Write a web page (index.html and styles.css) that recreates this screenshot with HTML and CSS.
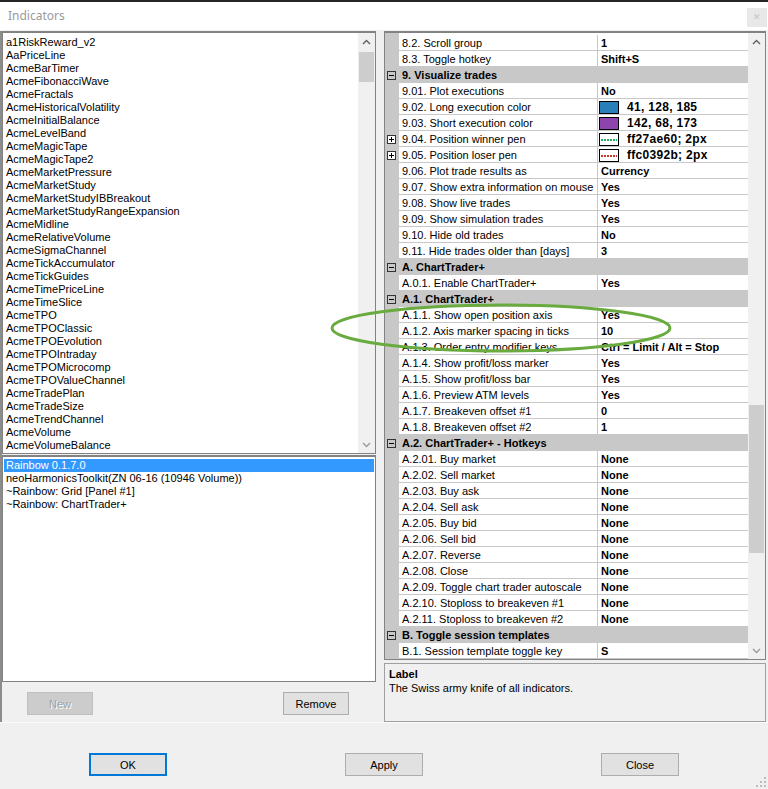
FILE: index.html
```html
<!DOCTYPE html>
<html lang="en">
  <head>
    <meta charset="UTF-8" />
    <title>Indicators</title>
    <link rel="stylesheet" href="styles.css">
  </head>
  <body>
    <div class="window">
      <div class="topline"></div>
      <div class="titlebar">
        <span class="title">Indicators</span>
        <span class="close">&#x2715;</span>
      </div>

      <div class="main">
        <!-- indicator lists -->
        <div class="left">
          <div class="listbox available">
            <ul>
              <li>a1RiskReward_v2</li>
              <li>AaPriceLine</li>
              <li>AcmeBarTimer</li>
              <li>AcmeFibonacciWave</li>
              <li>AcmeFractals</li>
              <li>AcmeHistoricalVolatility</li>
              <li>AcmeInitialBalance</li>
              <li>AcmeLevelBand</li>
              <li>AcmeMagicTape</li>
              <li>AcmeMagicTape2</li>
              <li>AcmeMarketPressure</li>
              <li>AcmeMarketStudy</li>
              <li>AcmeMarketStudyIBBreakout</li>
              <li>AcmeMarketStudyRangeExpansion</li>
              <li>AcmeMidline</li>
              <li>AcmeRelativeVolume</li>
              <li>AcmeSigmaChannel</li>
              <li>AcmeTickAccumulator</li>
              <li>AcmeTickGuides</li>
              <li>AcmeTimePriceLine</li>
              <li>AcmeTimeSlice</li>
              <li>AcmeTPO</li>
              <li>AcmeTPOClassic</li>
              <li>AcmeTPOEvolution</li>
              <li>AcmeTPOIntraday</li>
              <li>AcmeTPOMicrocomp</li>
              <li>AcmeTPOValueChannel</li>
              <li>AcmeTradePlan</li>
              <li>AcmeTradeSize</li>
              <li>AcmeTrendChannel</li>
              <li>AcmeVolume</li>
              <li>AcmeVolumeBalance</li>
            </ul>
            <div class="vscroll">
              <div class="arrow"><svg width="9" height="6" viewBox="0 0 9 6"><path d="M1 5 L4.5 1.5 L8 5" fill="none" stroke="#606060" stroke-width="1.4"/></svg></div>
              <div class="thumb small"></div>
              <div class="track"></div>
              <div class="arrow"><svg width="9" height="6" viewBox="0 0 9 6"><path d="M1 1 L4.5 4.5 L8 1" fill="none" stroke="#9a9a9a" stroke-width="1.4"/></svg></div>
            </div>
          </div>

          <div class="listbox applied">
            <ul>
              <li class="selected">Rainbow 0.1.7.0</li>
              <li>neoHarmonicsToolkit(ZN 06-16 (10946 Volume))</li>
              <li>~Rainbow: Grid [Panel #1]</li>
              <li>~Rainbow: ChartTrader+</li>
            </ul>
          </div>

          <div class="left-buttons">
            <button class="btn" disabled>New</button>
            <button class="btn">Remove</button>
          </div>
        </div>

        <!-- property grid -->
        <div class="right">
          <div class="propgrid">
            <div class="rows">
              <div class="row"><span class="gut"></span><span class="name">8.2. Scroll group</span><span class="val">1</span></div>
              <div class="row"><span class="gut"></span><span class="name">8.3. Toggle hotkey</span><span class="val">Shift+S</span></div>
              <div class="row cat"><span class="gut"><svg class="tog" viewBox="0 0 9 9"><rect x=".5" y=".5" width="8" height="8" fill="none" stroke="#333"/><path d="M2 4.5h5" stroke="#000"/></svg></span><span class="label">9. Visualize trades</span></div>
              <div class="row"><span class="gut"></span><span class="name">9.01. Plot executions</span><span class="val">No</span></div>
              <div class="row"><span class="gut"></span><span class="name">9.02. Long execution color</span><span class="val"><i class="swatch" style="background:#2980b9"></i><span class="wide-val">41, 128, 185</span></span></div>
              <div class="row"><span class="gut"></span><span class="name">9.03. Short execution color</span><span class="val"><i class="swatch" style="background:#8e44ad"></i><span class="wide-val">142, 68, 173</span></span></div>
              <div class="row"><span class="gut"><svg class="tog" viewBox="0 0 9 9"><rect x=".5" y=".5" width="8" height="8" fill="#fff" stroke="#333"/><path d="M2 4.5h5M4.5 2v5" stroke="#000"/></svg></span><span class="name">9.04. Position winner pen</span><span class="val"><i class="swatch pen"><b class="dots" style="color:#27ae60"></b></i><span class="wide-val">ff27ae60; 2px</span></span></div>
              <div class="row"><span class="gut"><svg class="tog" viewBox="0 0 9 9"><rect x=".5" y=".5" width="8" height="8" fill="#fff" stroke="#333"/><path d="M2 4.5h5M4.5 2v5" stroke="#000"/></svg></span><span class="name">9.05. Position loser pen</span><span class="val"><i class="swatch pen"><b class="dots" style="color:#c0392b"></b></i><span class="wide-val">ffc0392b; 2px</span></span></div>
              <div class="row"><span class="gut"></span><span class="name">9.06. Plot trade results as</span><span class="val">Currency</span></div>
              <div class="row"><span class="gut"></span><span class="name">9.07. Show extra information on mouse</span><span class="val">Yes</span></div>
              <div class="row"><span class="gut"></span><span class="name">9.08. Show live trades</span><span class="val">Yes</span></div>
              <div class="row"><span class="gut"></span><span class="name">9.09. Show simulation trades</span><span class="val">Yes</span></div>
              <div class="row"><span class="gut"></span><span class="name">9.10. Hide old trades</span><span class="val">No</span></div>
              <div class="row"><span class="gut"></span><span class="name">9.11. Hide trades older than [days]</span><span class="val">3</span></div>
              <div class="row cat"><span class="gut"><svg class="tog" viewBox="0 0 9 9"><rect x=".5" y=".5" width="8" height="8" fill="none" stroke="#333"/><path d="M2 4.5h5" stroke="#000"/></svg></span><span class="label">A. ChartTrader+</span></div>
              <div class="row"><span class="gut"></span><span class="name">A.0.1. Enable ChartTrader+</span><span class="val">Yes</span></div>
              <div class="row cat"><span class="gut"><svg class="tog" viewBox="0 0 9 9"><rect x=".5" y=".5" width="8" height="8" fill="none" stroke="#333"/><path d="M2 4.5h5" stroke="#000"/></svg></span><span class="label">A.1. ChartTrader+</span></div>
              <div class="row"><span class="gut"></span><span class="name">A.1.1. Show open position axis</span><span class="val">Yes</span></div>
              <div class="row"><span class="gut"></span><span class="name">A.1.2. Axis marker spacing in ticks</span><span class="val">10</span></div>
              <div class="row"><span class="gut"></span><span class="name">A.1.3. Order entry modifier keys</span><span class="val">Ctrl = Limit / Alt = Stop</span></div>
              <div class="row"><span class="gut"></span><span class="name">A.1.4. Show profit/loss marker</span><span class="val">Yes</span></div>
              <div class="row"><span class="gut"></span><span class="name">A.1.5. Show profit/loss bar</span><span class="val">Yes</span></div>
              <div class="row"><span class="gut"></span><span class="name">A.1.6. Preview ATM levels</span><span class="val">Yes</span></div>
              <div class="row"><span class="gut"></span><span class="name">A.1.7. Breakeven offset #1</span><span class="val">0</span></div>
              <div class="row"><span class="gut"></span><span class="name">A.1.8. Breakeven offset #2</span><span class="val">1</span></div>
              <div class="row cat"><span class="gut"><svg class="tog" viewBox="0 0 9 9"><rect x=".5" y=".5" width="8" height="8" fill="none" stroke="#333"/><path d="M2 4.5h5" stroke="#000"/></svg></span><span class="label">A.2. ChartTrader+ - Hotkeys</span></div>
              <div class="row"><span class="gut"></span><span class="name">A.2.01. Buy market</span><span class="val">None</span></div>
              <div class="row"><span class="gut"></span><span class="name">A.2.02. Sell market</span><span class="val">None</span></div>
              <div class="row"><span class="gut"></span><span class="name">A.2.03. Buy ask</span><span class="val">None</span></div>
              <div class="row"><span class="gut"></span><span class="name">A.2.04. Sell ask</span><span class="val">None</span></div>
              <div class="row"><span class="gut"></span><span class="name">A.2.05. Buy bid</span><span class="val">None</span></div>
              <div class="row"><span class="gut"></span><span class="name">A.2.06. Sell bid</span><span class="val">None</span></div>
              <div class="row"><span class="gut"></span><span class="name">A.2.07. Reverse</span><span class="val">None</span></div>
              <div class="row"><span class="gut"></span><span class="name">A.2.08. Close</span><span class="val">None</span></div>
              <div class="row"><span class="gut"></span><span class="name">A.2.09. Toggle chart trader autoscale</span><span class="val">None</span></div>
              <div class="row"><span class="gut"></span><span class="name">A.2.10. Stoploss to breakeven #1</span><span class="val">None</span></div>
              <div class="row"><span class="gut"></span><span class="name">A.2.11. Stoploss to breakeven #2</span><span class="val">None</span></div>
              <div class="row cat"><span class="gut"><svg class="tog" viewBox="0 0 9 9"><rect x=".5" y=".5" width="8" height="8" fill="none" stroke="#333"/><path d="M2 4.5h5" stroke="#000"/></svg></span><span class="label">B. Toggle session templates</span></div>
              <div class="row"><span class="gut"></span><span class="name">B.1. Session template toggle key</span><span class="val">S</span></div>
            </div>
            <div class="vscroll">
              <div class="arrow"><svg width="9" height="6" viewBox="0 0 9 6"><path d="M1 5 L4.5 1.5 L8 5" fill="none" stroke="#606060" stroke-width="1.4"/></svg></div>
              <div class="thumb big"></div>
              <div class="track"></div>
              <div class="arrow"><svg width="9" height="6" viewBox="0 0 9 6"><path d="M1 1 L4.5 4.5 L8 1" fill="none" stroke="#9a9a9a" stroke-width="1.4"/></svg></div>
            </div>
          </div>

          <div class="desc">
            <div class="desc-title">Label</div>
            <div>The Swiss army knife of all indicators.</div>
          </div>
        </div>
      </div>

      <div class="footer">
        <button class="btn wide default">OK</button>
        <button class="btn wide">Apply</button>
        <button class="btn wide">Close</button>
        <svg class="grip" width="10" height="10" viewBox="0 0 10 10">
          <rect x="8" y="0" width="2" height="2" fill="#bcbcbc"/>
          <rect x="4" y="4" width="2" height="2" fill="#bcbcbc"/>
          <rect x="8" y="4" width="2" height="2" fill="#bcbcbc"/>
          <rect x="0" y="8" width="2" height="2" fill="#bcbcbc"/>
          <rect x="4" y="8" width="2" height="2" fill="#bcbcbc"/>
          <rect x="8" y="8" width="2" height="2" fill="#bcbcbc"/>
        </svg>
      </div>

      <!-- hand-drawn highlight around the axis settings -->
      <svg class="mark" width="768" height="789" viewBox="0 0 768 789">
        <ellipse cx="501" cy="328" rx="169" ry="23" fill="none" stroke="#6aab3f" stroke-width="3"/>
      </svg>
    </div>
  </body>
</html>
```

FILE: styles.css
```css
body {
  margin: 0;
  background: #f0f0f0;
  font-family: "Liberation Sans", Arial, sans-serif;
  font-size: 11px;
  color: #000;
}
.window {
  position: relative;
  width: 768px;
  height: 789px;
  overflow: hidden;
  display: flex;
  flex-direction: column;
}
.topline {
  height: 2px;
  background: #262626;
  flex: none;
}
.titlebar {
  height: 28px;
  flex: none;
  background: #fff;
  display: flex;
  justify-content: space-between;
  align-items: flex-start;
}
.title {
  font-family: "Noto Sans", sans-serif;
  font-size: 12px;
  line-height: 16px;
  color: #9a9a9a;
  padding: 6px 0 0 8px;
}
.close {
  width: 20px;
  height: 19px;
  margin: 6px 1px 0 0;
  background: #e8e8e8;
  color: #c4c4c4;
  font-size: 9px;
  line-height: 19px;
  text-align: center;
}

/* main split area */
.main {
  height: 692px;
  flex: none;
  box-sizing: border-box;
  padding-top: 1px;
  display: flex;
}
.left {
  width: 378px;
  border-left: 2px solid #8c8c8c;
  box-sizing: border-box;
  display: flex;
  flex-direction: column;
}
.listbox {
  width: 374px;
  background: #fff;
  border: 1px solid #828282;
  border-top-width: 2px;
  box-sizing: border-box;
  overflow: hidden;
}
.listbox ul {
  margin: 0;
  padding: 0;
  list-style: none;
}
.listbox li {
  line-height: 13px;
  height: 13px;
  white-space: nowrap;
}
.available {
  height: 423px;
  display: flex;
}
.available ul {
  flex: 1;
  padding: 3px 0 0 3px;
}
.applied {
  height: 227px;
  margin-top: 1px;
  padding: 2px 1px 0 1px;
}
.applied li {
  padding-left: 2px;
}
.applied li.selected {
  background: #3399ff;
  color: #fff;
}
.left-buttons {
  display: flex;
  gap: 190px;
  padding: 10px 0 0 25px;
}

/* scrollbars */
.vscroll {
  width: 17px;
  flex: none;
  background: #f0f0f0;
  display: flex;
  flex-direction: column;
}
.vscroll .arrow {
  height: 17px;
  display: flex;
  align-items: center;
  justify-content: center;
}
.vscroll .thumb {
  margin: 0 1px;
  background: #cdcdcd;
}
.thumb.small {
  margin-top: 2px;
  height: 30px;
}
.thumb.big {
  margin-top: 355px;
  height: 148px;
}
.vscroll .track {
  flex: 1;
}

/* property grid */
.right {
  width: 382px;
  margin-left: 6px;
  display: flex;
  flex-direction: column;
}
.propgrid {
  height: 629px;
  background: #fff;
  border: 1px solid #828282;
  border-top-width: 2px;
  box-sizing: border-box;
  display: flex;
  overflow: hidden;
}
.rows {
  width: 363px;
  padding-top: 2px;
  background: linear-gradient(to right, #c8c8c8 14px, #fff 14px);
}
.row {
  display: grid;
  grid-template-columns: 14px 199px 150px;
  height: 16px;
}
.row .gut {
  position: relative;
  background: #c8c8c8;
}
.row .name,
.row .val {
  box-sizing: border-box;
  height: 16px;
  line-height: 17px;
  padding-left: 3px;
  border-bottom: 1px solid #c8c8c8;
  white-space: nowrap;
  overflow: hidden;
}
.row .name {
  border-right: 1px solid #c8c8c8;
}
.row .val {
  font-weight: bold;
  display: flex;
  align-items: flex-start;
}
.wide-val {
  font-size: 12px;
  letter-spacing: 0.3px;
}
.row.cat {
  background: #c8c8c8;
}
.row.cat .label {
  grid-column: 2 / 4;
  line-height: 17px;
  padding-left: 3px;
  font-weight: bold;
}
.tog {
  position: absolute;
  left: 2px;
  top: 4px;
  width: 9px;
  height: 9px;
}
.swatch {
  width: 18px;
  height: 11px;
  margin: 2px 8px 0 -2px;
  border: 1px solid #000;
  flex: none;
  display: flex;
  align-items: center;
}
.swatch.pen {
  background: #fff;
}
.dots {
  display: block;
  width: 16px;
  height: 2px;
  margin-left: 1px;
  background: repeating-linear-gradient(to right, currentColor 0 2px, transparent 2px 3px);
}

.desc {
  height: 59px;
  margin-top: 3px;
  border: 1px solid #a0a0a0;
  box-sizing: border-box;
  padding: 3px 4px;
  line-height: 14px;
}
.desc-title {
  font-weight: bold;
}

/* buttons */
.btn {
  height: 23px;
  width: 66px;
  padding: 0;
  font-family: "Liberation Sans", Arial, sans-serif;
  font-size: 11px;
  color: #000;
  background: #e1e1e1;
  border: 1px solid #adadad;
}
.btn:disabled {
  background: #cccccc;
  border-color: #bfbfbf;
  color: #a0a0a0;
  text-shadow: 1px 1px 0 #fff;
}
.btn.wide {
  width: 78px;
}
.btn.default {
  border: 2px solid #0078d7;
}
.footer {
  position: relative;
  flex: 1;
  border-top: 1px solid #fbfbfb;
  display: flex;
  align-items: flex-start;
  gap: 178px;
  padding: 30px 0 0 89px;
}
.grip {
  position: absolute;
  right: 2px;
  bottom: 2px;
}
.mark {
  position: absolute;
  left: 0;
  top: 0;
  pointer-events: none;
}
```
